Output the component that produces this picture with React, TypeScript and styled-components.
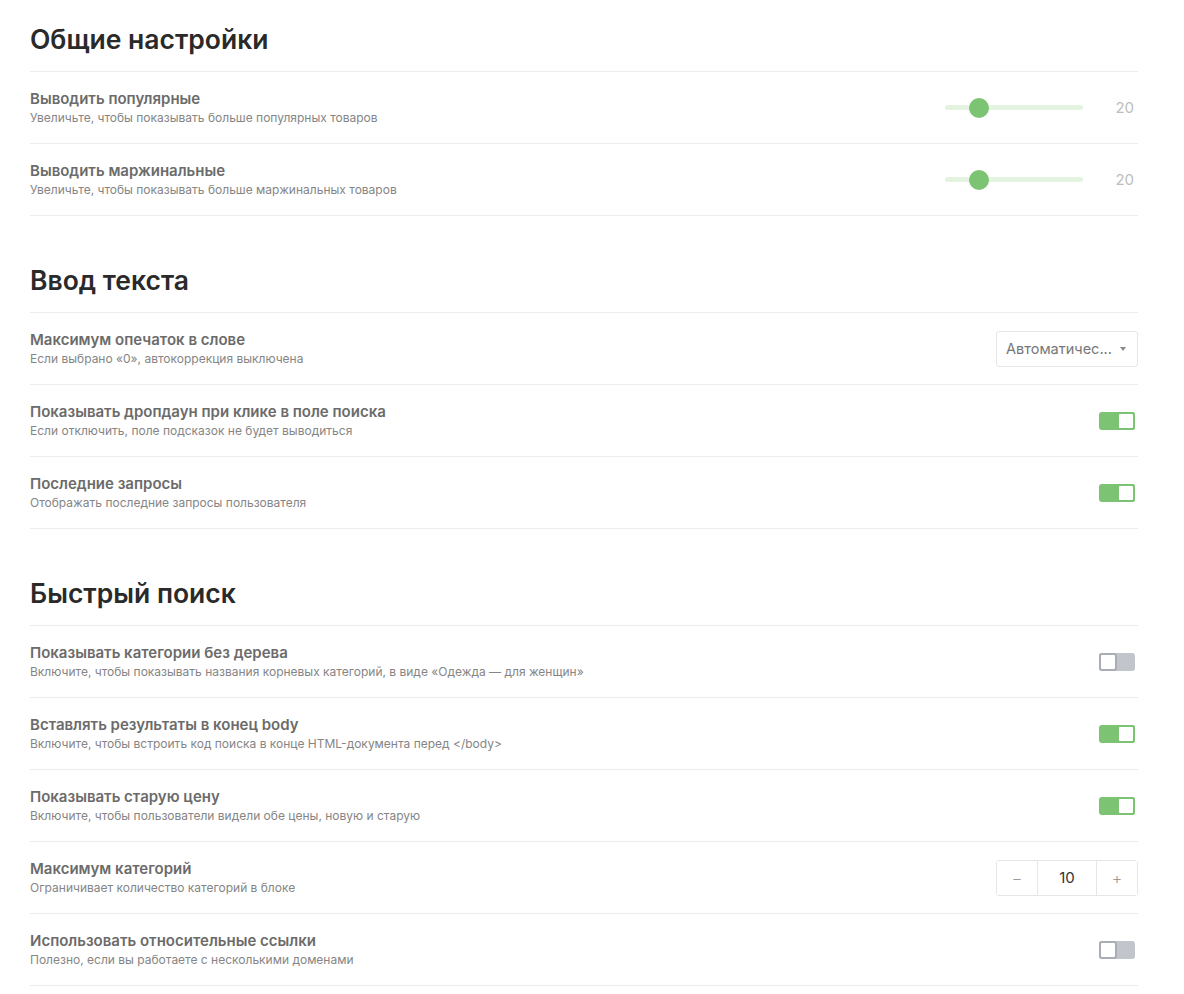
import React, { useState } from "react"
import styled, { createGlobalStyle } from "styled-components"

const GlobalStyle = createGlobalStyle`
  html, body {
    margin: 0;
    padding: 0;
    background: #fff;
  }
  body {
    font-family: Inter, "Noto Sans", "Liberation Sans", sans-serif;
    -webkit-font-smoothing: antialiased;
  }
`

type Control =
  | { kind: "slider"; value: number; min: number; max: number }
  | { kind: "select"; value: string }
  | { kind: "toggle"; on: boolean }
  | { kind: "stepper"; value: number }

interface Setting {
  id: string
  title: string
  hint: string
  control: Control
}

interface Section {
  title: string
  items: Setting[]
}

const sections: Section[] = [
  {
    title: "Общие настройки",
    items: [
      {
        id: "popular",
        title: "Выводить популярные",
        hint: "Увеличьте, чтобы показывать больше популярных товаров",
        control: { kind: "slider", value: 20, min: 0, max: 80 },
      },
      {
        id: "marginal",
        title: "Выводить маржинальные",
        hint: "Увеличьте, чтобы показывать больше маржинальных товаров",
        control: { kind: "slider", value: 20, min: 0, max: 80 },
      },
    ],
  },
  {
    title: "Ввод текста",
    items: [
      {
        id: "typos",
        title: "Максимум опечаток в слове",
        hint: "Если выбрано «0», автокоррекция выключена",
        control: { kind: "select", value: "Автоматичес..." },
      },
      {
        id: "dropdown",
        title: "Показывать дропдаун при клике в поле поиска",
        hint: "Если отключить, поле подсказок не будет выводиться",
        control: { kind: "toggle", on: true },
      },
      {
        id: "recent",
        title: "Последние запросы",
        hint: "Отображать последние запросы пользователя",
        control: { kind: "toggle", on: true },
      },
    ],
  },
  {
    title: "Быстрый поиск",
    items: [
      {
        id: "flatCats",
        title: "Показывать категории без дерева",
        hint: "Включите, чтобы показывать названия корневых категорий, в виде «Одежда — для женщин»",
        control: { kind: "toggle", on: false },
      },
      {
        id: "body",
        title: "Вставлять результаты в конец body",
        hint: "Включите, чтобы встроить код поиска в конце HTML-документа перед </body>",
        control: { kind: "toggle", on: true },
      },
      {
        id: "oldPrice",
        title: "Показывать старую цену",
        hint: "Включите, чтобы пользователи видели обе цены, новую и старую",
        control: { kind: "toggle", on: true },
      },
      {
        id: "maxCats",
        title: "Максимум категорий",
        hint: "Ограничивает количество категорий в блоке",
        control: { kind: "stepper", value: 10 },
      },
      {
        id: "relative",
        title: "Использовать относительные ссылки",
        hint: "Полезно, если вы работаете с несколькими доменами",
        control: { kind: "toggle", on: false },
      },
    ],
  },
]

function Slider({ value, min, max }: { value: number; min: number; max: number }) {
  const pct = ((value - min) / (max - min)) * 100
  return (
    <SliderWrap>
      <Track>
        <Thumb style={{ left: `${pct}%` }} />
      </Track>
      <SliderValue>{value}</SliderValue>
    </SliderWrap>
  )
}

function Toggle({ initial }: { initial: boolean }) {
  const [on, setOn] = useState(initial)
  return (
    <ToggleTrack $on={on} onClick={() => setOn(!on)}>
      <ToggleKnob $on={on} />
    </ToggleTrack>
  )
}

function Stepper({ initial }: { initial: number }) {
  const [value, setValue] = useState(initial)
  return (
    <StepperBox>
      <StepButton onClick={() => setValue(value - 1)}>−</StepButton>
      <StepValue>{value}</StepValue>
      <StepButton onClick={() => setValue(value + 1)}>+</StepButton>
    </StepperBox>
  )
}

function renderControl(c: Control) {
  switch (c.kind) {
    case "slider":
      return <Slider value={c.value} min={c.min} max={c.max} />
    case "select":
      return (
        <Select>
          <SelectText>{c.value}</SelectText>
          <Caret />
        </Select>
      )
    case "toggle":
      return <Toggle initial={c.on} />
    case "stepper":
      return <Stepper initial={c.value} />
  }
}

export default function App() {
  return (
    <>
      <GlobalStyle />
      <Page>
        {sections.map((section) => (
          <Block key={section.title}>
            <Heading>{section.title}</Heading>
            <List>
              {section.items.map((item) => (
                <Row key={item.id}>
                  <Text>
                    <Title>{item.title}</Title>
                    <Hint>{item.hint}</Hint>
                  </Text>
                  {renderControl(item.control)}
                </Row>
              ))}
            </List>
          </Block>
        ))}
      </Page>
    </>
  )
}

const Page = styled.div`
  width: 1108px;
  padding: 0 0 0 30px;
`

const Block = styled.section`
  padding-top: 23px;
  margin-bottom: 25px;
`

const Heading = styled.h2`
  margin: 0 0 16px;
  font-size: 26.5px;
  line-height: 32px;
  font-weight: 600;
  color: #2a2a2a;
`

const List = styled.div`
  border-top: 1px solid #ececec;
`

const Row = styled.div`
  display: flex;
  align-items: center;
  justify-content: space-between;
  height: 71px;
  border-bottom: 1px solid #ececec;
`

const Text = styled.div`
  display: flex;
  flex-direction: column;
  gap: 0;
  margin-top: -1px;
`

const Title = styled.div`
  font-size: 15px;
  line-height: 20px;
  font-weight: 600;
  color: #6b6b6b;
`

const Hint = styled.div`
  font-size: 12px;
  line-height: 17px;
  color: #858585;
`

const SliderWrap = styled.div`
  display: flex;
  align-items: center;
  margin-right: 4px;
`

const Track = styled.div`
  position: relative;
  width: 138px;
  height: 5px;
  border-radius: 3px;
  background: #e3f3e0;
`

const Thumb = styled.div`
  position: absolute;
  top: 50%;
  width: 20px;
  height: 20px;
  margin: -10px 0 0 -11px;
  border-radius: 50%;
  background: #7cc374;
`

const SliderValue = styled.div`
  width: 51px;
  text-align: right;
  font-size: 15px;
  color: #bdbdbd;
`

const Select = styled.div`
  display: flex;
  align-items: center;
  justify-content: space-between;
  box-sizing: border-box;
  width: 142px;
  height: 36px;
  padding: 0 11px 0 9px;
  border: 1px solid #e6e6e6;
  border-radius: 3px;
  cursor: pointer;
`

const SelectText = styled.span`
  white-space: nowrap;
  font-size: 14.5px;
  color: #777;
`

const Caret = styled.span`
  width: 0;
  height: 0;
  border-left: 3.5px solid transparent;
  border-right: 3.5px solid transparent;
  border-top: 4px solid #8a8a8a;
`

const ToggleTrack = styled.div<{ $on: boolean }>`
  display: flex;
  justify-content: ${(p) => (p.$on ? "flex-end" : "flex-start")};
  box-sizing: border-box;
  width: 36px;
  height: 18px;
  margin-right: 3px;
  border-radius: 3px;
  background: ${(p) => (p.$on ? "#7cc374" : "#c2c5cc")};
  cursor: pointer;
`

const ToggleKnob = styled.div<{ $on: boolean }>`
  box-sizing: border-box;
  width: 18px;
  height: 18px;
  border-radius: 3px;
  background: #fff;
  border: 2px solid ${(p) => (p.$on ? "#7cc374" : "#a9adb5")};
`

const StepperBox = styled.div`
  display: flex;
  box-sizing: border-box;
  height: 36px;
  border: 1px solid #e6e6e6;
  border-radius: 3px;
`

const StepButton = styled.button`
  width: 40px;
  border: none;
  background: #fff;
  font-family: inherit;
  font-size: 16px;
  font-weight: 300;
  color: #999;
  cursor: pointer;
  padding: 0;
`

const StepValue = styled.div`
  display: flex;
  align-items: center;
  justify-content: center;
  width: 58px;
  border-left: 1px solid #e6e6e6;
  border-right: 1px solid #e6e6e6;
  font-size: 15px;
  color: #333;
`
